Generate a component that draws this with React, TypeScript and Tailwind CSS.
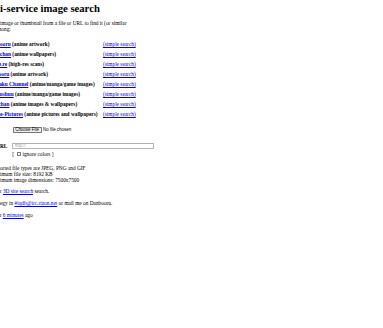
const services = [
  { name: 'Danbooru', desc: 'anime artwork' },
  { name: 'Konachan', desc: 'anime wallpapers' },
  { name: 'yande.re', desc: 'high-res scans' },
  { name: 'Gelbooru', desc: 'anime artwork' },
  { name: 'Sankaku Channel', desc: 'anime/manga/game images' },
  { name: 'e-shuushuu', desc: 'anime/manga/game images' },
  { name: 'Zerochan', desc: 'anime images & wallpapers' },
  { name: 'Anime-Pictures', desc: 'anime pictures and wallpapers' },
];

function Link({ children }: { children: React.ReactNode }) {
  return (
    <a href="#" className="text-[#0000ee] underline [text-decoration-skip-ink:none]">
      {children}
    </a>
  );
}

export default function App() {
  return (
    <div className="w-[383px] h-[328px] overflow-hidden bg-white text-black font-['Liberation_Serif',serif] text-[5.33px] leading-[6.13px] pt-[2.3px]">
      <h1 className="-ml-[22.5px] text-[10.67px] leading-[12.27px] font-bold whitespace-nowrap">
        Multi-service image search
      </h1>

      <p className="-ml-[23.4px] mt-[5.8px] whitespace-nowrap">
        Upload an image or thumbnail from a file or URL to find it (or similar
        <br />
        images) among:
      </p>

      <div className="-ml-[12.4px] mt-[6px] grid grid-cols-[115.4px_auto]">
        {services.map(s => (
          <div key={s.name} className="contents">
            <div className="h-[10px] flex items-center whitespace-nowrap font-bold">
              <span>
                <Link>{s.name}</Link> ({s.desc})
              </span>
            </div>
            <div className="h-[10px] flex items-center whitespace-nowrap">
              <Link>(simple search)</Link>
            </div>
          </div>
        ))}
      </div>

      <div className="mt-[8px] h-[6.5px] flex items-center pl-[12.5px] font-['Liberation_Sans',sans-serif] text-[4.44px] leading-none">
        <button
          type="button"
          className="h-[5.4px] px-[1.7px] bg-[#efefef] border-[0.5px] border-[#767676] rounded-[0.7px] leading-none"
        >
          Choose File
        </button>
        <span className="ml-[1.5px]">No file chosen</span>
      </div>

      <div className="mt-[9.4px] flex items-center -ml-[3.9px]">
        <span className="w-[16.2px] font-bold">URL</span>
        <input
          type="text"
          placeholder="http://"
          className="w-[142px] h-[6.3px] border-[0.7px] border-[#b4b4b4] px-[1.3px] font-['Liberation_Sans',sans-serif] text-[4.44px] leading-none placeholder:text-[#a0a0a0] outline-none"
        />
      </div>

      <div className="mt-[2.4px] pl-[12.3px] flex items-center whitespace-nowrap">
        <span>[</span>
        <span className="ml-[3px] w-[3.8px] h-[3.8px] border-[0.6px] border-[#767676] rounded-[0.6px] bg-white" />
        <span className="ml-[1.6px]">ignore colors ]</span>
      </div>

      <div className="mt-[7.2px] -ml-[11px] whitespace-nowrap">
        Supported file types are JPEG, PNG and GIF
        <br />
        <span className="ml-[1.2px]">Maximum file size: 8192 KB</span>
        <br />
        <span className="ml-[1.2px]">Maximum image dimensions: 7500x7500</span>
      </div>

      <p className="mt-[4.7px] -ml-[14.4px] whitespace-nowrap">
        Try our <Link>3D site search</Link> search.
      </p>

      <p className="mt-[6.2px] -ml-[10.1px] whitespace-nowrap">
        Strategy in <Link>#iqdb@irc.rizon.net</Link> or mail me on Danbooru.
      </p>

      <p className="mt-[6.3px] -ml-[9.2px] whitespace-nowrap">
        Over <Link>6 minutes</Link> ago
      </p>
    </div>
  );
}
